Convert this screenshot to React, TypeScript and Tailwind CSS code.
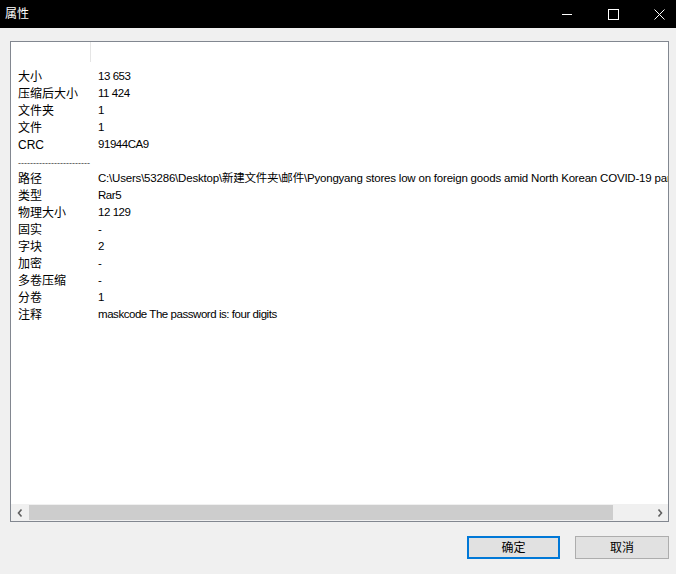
import React from 'react';

const FONT = '"Liberation Sans", "Noto Sans CJK SC", sans-serif';

const rows: [string, string][] = [
  ['大小', '13 653'],
  ['压缩后大小', '11 424'],
  ['文件夹', '1'],
  ['文件', '1'],
  ['CRC', '91944CA9'],
  ['------------------------', ''],
  ['路径', 'C:\\Users\\53286\\Desktop\\新建文件夹\\邮件\\Pyongyang stores low on foreign goods amid North Korean COVID-19 paranoia.eml'],
  ['类型', 'Rar5'],
  ['物理大小', '12 129'],
  ['固实', '-'],
  ['字块', '2'],
  ['加密', '-'],
  ['多卷压缩', '-'],
  ['分卷', '1'],
  ['注释', 'maskcode The password is: four digits'],
];

const TitleBar: React.FC = () => (
  <div className="h-[28px] bg-black flex items-center shrink-0">
    <span className="pl-[5px] text-white text-[12px]">属性</span>
    <div className="ml-auto mr-[-6px] flex h-full">
      <div className="w-[46px] h-full flex items-center justify-center">
        <div className="w-[10px] h-px bg-white" />
      </div>
      <div className="w-[46px] h-full flex items-center justify-center">
        <div className="w-[11px] h-[11px] border border-white" />
      </div>
      <div className="w-[46px] h-full flex items-center justify-center">
        <svg width="11" height="11" viewBox="0 0 11 11">
          <path d="M0.5 0.5 L10.5 10.5 M10.5 0.5 L0.5 10.5" stroke="white" strokeWidth="1" />
        </svg>
      </div>
    </div>
  </div>
);

const Chevron: React.FC<{ dir: 'l' | 'r' }> = ({ dir }) => (
  <svg width="6" height="8" viewBox="0 0 6 8">
    <path
      d={dir === 'l' ? 'M4.5 0.5 L1.5 4 L4.5 7.5' : 'M1.5 0.5 L4.5 4 L1.5 7.5'}
      stroke="#606060"
      strokeWidth="1.6"
      fill="none"
    />
  </svg>
);

export default function App() {
  return (
    <div
      className="w-[676px] h-[574px] bg-[#f0f0f0] flex flex-col overflow-hidden text-black"
      style={{ fontFamily: FONT }}
    >
      <TitleBar />
      <div className="flex-1 flex flex-col pt-[13px] pl-[10px] pr-[7px]">
        <div className="h-[481px] border border-[#828790] bg-white flex flex-col overflow-hidden">
          <div className="h-[26px] flex shrink-0">
            <div className="w-[80px] h-[20px] border-r border-[#e5e5e5]" />
          </div>
          <div className="flex-1 text-[11.5px] tracking-[-0.45px]">
            {rows.map(([k, v], i) => (
              <div key={i} className="h-[17px] flex items-center whitespace-nowrap">
                <div className="w-[80px] pl-[7px] shrink-0 overflow-hidden text-[12px] tracking-normal">
                  {k.startsWith('-') ? (
                    <span className="text-[9px] text-[#444]">{k}</span>
                  ) : (
                    k
                  )}
                </div>
                <div className={k === '路径' ? 'pl-[7px] tracking-[-0.2px]' : 'pl-[7px]'}>{v}</div>
              </div>
            ))}
          </div>
          <div className="h-[17px] flex bg-[#f0f0f0] shrink-0">
            <div className="w-[17px] flex items-center justify-center">
              <Chevron dir="l" />
            </div>
            <div className="flex-1 flex items-stretch py-px">
              <div className="w-[584px] ml-px bg-[#cdcdcd]" />
            </div>
            <div className="w-[17px] flex items-center justify-center">
              <Chevron dir="r" />
            </div>
          </div>
        </div>
        <div className="flex justify-end gap-[15px] mt-[14px]">
          <button className="w-[93px] h-[23px] border-2 border-[#0078d7] bg-[#e1e1e1] text-[12px] flex items-center justify-center">
            确定
          </button>
          <button className="w-[94px] h-[23px] border border-[#adadad] bg-[#e1e1e1] text-[12px] flex items-center justify-center">
            取消
          </button>
        </div>
      </div>
    </div>
  );
}
